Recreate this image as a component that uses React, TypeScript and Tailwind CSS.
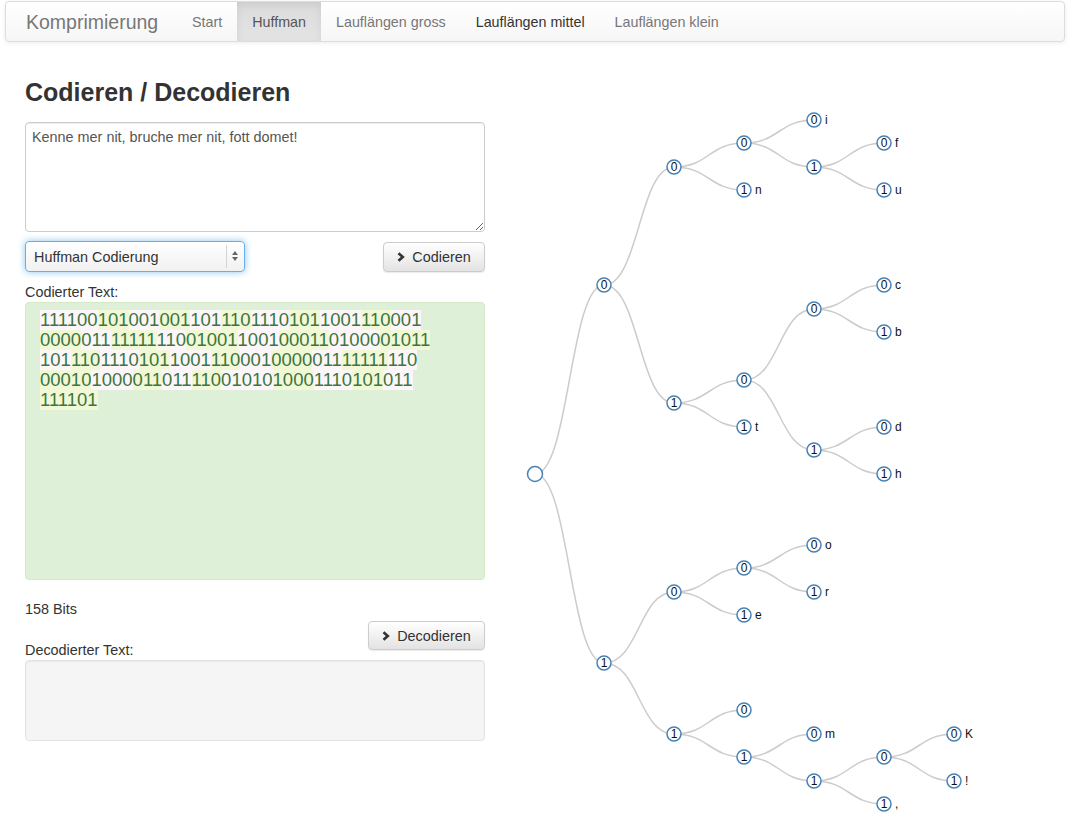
import React from 'react';

// Huffman-Baum: Code -> [y, Zeichen]
const X = [535, 604, 674, 744, 814, 884, 954];
const tree: [string, number, string][] = [
  ['', 474, ''],
  ['0', 285, ''],
  ['1', 663, ''],
  ['00', 167, ''],
  ['01', 403, ''],
  ['10', 592, ''],
  ['11', 734, ''],
  ['000', 143, ''],
  ['001', 190, 'n'],
  ['010', 380, ''],
  ['011', 427, 't'],
  ['100', 568, ''],
  ['101', 615, 'e'],
  ['110', 710, ' '],
  ['111', 757, ''],
  ['0000', 120, 'i'],
  ['0001', 167, ''],
  ['0100', 309, ''],
  ['0101', 450, ''],
  ['1000', 545, 'o'],
  ['1001', 592, 'r'],
  ['1110', 734, 'm'],
  ['1111', 781, ''],
  ['00010', 143, 'f'],
  ['00011', 190, 'u'],
  ['01000', 285, 'c'],
  ['01001', 332, 'b'],
  ['01010', 427, 'd'],
  ['01011', 474, 'h'],
  ['11110', 757, ''],
  ['11111', 804, ','],
  ['111100', 734, 'K'],
  ['111101', 781, '!'],
];

const input = 'Kenne mer nit, bruche mer nit, fott domet!';

const codeOf: Record<string, string> = {};
const yOf: Record<string, number> = {};
tree.forEach(([code, y, ch]) => {
  yOf[code] = y;
  if (ch) codeOf[ch] = code;
});

const encoded = input.split('').map((ch) => codeOf[ch]);
const bits = encoded.join('').length;

function Chevron() {
  return (
    <svg width="8" height="10" viewBox="0 0 8 10" className="shrink-0">
      <path d="M1.5 1.2 L5.8 5 L1.5 8.8" fill="none" stroke="#333" strokeWidth={2.6} />
    </svg>
  );
}

function HuffmanTree() {
  return (
    <svg width={560} height={720} viewBox="505 100 560 720" className="ml-[20px] mt-[58px] shrink-0">
      {tree
        .filter(([code]) => code.length > 0)
        .map(([code, y]) => {
          const parent = code.slice(0, -1);
          const px = X[parent.length];
          const py = yOf[parent];
          const x = X[code.length];
          const mx = (px + x) / 2;
          return (
            <path
              key={'l' + code}
              d={`M${px},${py}C${mx},${py} ${mx},${y} ${x},${y}`}
              fill="none"
              stroke="#ccc"
              strokeWidth={1.5}
            />
          );
        })}
      {tree.map(([code, y, ch]) => {
        const x = X[code.length];
        return (
          <g key={'n' + code}>
            <circle cx={x} cy={y} r={code ? 7 : 7.5} fill="#fff" stroke="#4682b4" strokeWidth={1.5} />
            {code && (
              <text x={x} y={y + 4.3} textAnchor="middle" fontSize={12} fill="#111" fontFamily="'Liberation Sans', Arial, sans-serif">
                {code.slice(-1)}
              </text>
            )}
            {ch.trim() && (
              <text x={x + 11} y={y + 4.3} fontSize={12} fill="#111" fontFamily="'Liberation Sans', Arial, sans-serif">
                {ch}
              </text>
            )}
          </g>
        );
      })}
    </svg>
  );
}

export default function App() {
  const navItems = ['Start', 'Huffman', 'Lauflängen gross', 'Lauflängen mittel', 'Lauflängen klein'];

  return (
    <div className="min-h-screen bg-white font-['Liberation_Sans',Arial,sans-serif] text-[14px] leading-[20px] text-[#333]">
      {/* Navbar */}
      <nav className="ml-[5px] mr-[12px] mt-px flex h-[41px] items-stretch rounded-[4px] border border-[#dcdcdc] bg-linear-to-b from-white to-[#f6f6f6] shadow-[0_1px_4px_rgba(0,0,0,0.08)]">
        <div className="flex w-[171px] items-center pl-[20px] text-[19.5px] text-[#777]">Komprimierung</div>
        <ul className="flex items-stretch text-[14.3px]">
          {navItems.map((item) => (
            <li
              key={item}
              className={
                item === 'Huffman'
                  ? 'flex items-center bg-linear-to-b from-[#dbdbdb] to-[#e4e4e4] px-[15px] text-[#555] shadow-[inset_0_3px_9px_rgba(0,0,0,0.07)]'
                  : item === 'Lauflängen mittel'
                  ? 'flex items-center px-[15px] text-[#333]'
                  : 'flex items-center px-[15px] text-[#777]'
              }
            >
              {item}
            </li>
          ))}
        </ul>
      </nav>

      <div className="flex pl-[25px]">
        {/* Left column */}
        <div className="w-[460px] shrink-0 pt-[36px]">
          <h2 className="text-[25px] font-bold leading-[28px] text-[#333]">Codieren / Decodieren</h2>

          <textarea
            defaultValue={input}
            className="mt-[16px] block h-[110px] w-full rounded-[4px] border border-[#ccc] px-[6px] pt-[4px] text-[14.4px] leading-[20px] text-[#555] shadow-[inset_0_1px_1px_rgba(0,0,0,0.075)] outline-none"
          />

          <div className="mt-[9px] flex items-start justify-between">
            <div className="relative h-[31px] w-[220px] rounded-[4px] border border-[#66afe9] bg-linear-to-b from-white to-[#f1f1f1] shadow-[0_0_7px_rgba(102,175,233,0.75)]">
              <div className="flex h-full items-center pl-[8px] text-[14.4px] text-[#333]">Huffman Codierung</div>
              <div className="absolute right-[17px] top-[3px] bottom-[3px] w-px bg-[#d4d4d4]" />
              <div className="absolute right-[6px] top-[9px] flex flex-col items-center gap-[2px]">
                <div className="h-0 w-0 border-x-[3px] border-b-[4px] border-x-transparent border-b-[#666]" />
                <div className="h-0 w-0 border-x-[3px] border-t-[4px] border-x-transparent border-t-[#666]" />
              </div>
            </div>
            <button className="mt-px flex h-[30px] w-[102px] items-center justify-center gap-[7px] rounded-[4px] border border-[#ccc] bg-linear-to-b from-white to-[#e3e3e3] text-[14.4px] text-[#333] shadow-[0_1px_1px_rgba(0,0,0,0.08)]">
              <Chevron />
              Codieren
            </button>
          </div>

          <div className="mt-[10px] text-[14.4px]">Codierter Text:</div>
          <div className="h-[278px] rounded-[4px] border border-[#d6e9c6] bg-[#dff0d8] pl-[14px] pt-[7px]">
            <div className="flex w-[415px] flex-wrap text-[18.5px] leading-[20px] text-[#3c763d]">
              {encoded.map((code, i) => (
                <span key={i} className={i % 2 === 0 ? 'bg-[#fcf6fb]' : 'bg-[#f1f8d6]'}>
                  {code}
                </span>
              ))}
            </div>
          </div>

          <div className="mt-[19px] text-[14.4px]">{bits} Bits</div>
          <div className="mt-[2px] flex items-end justify-between">
            <div className="text-[14.4px]">Decodierter Text:</div>
            <button className="mb-[10px] flex h-[29px] w-[117px] items-center justify-center gap-[7px] rounded-[4px] border border-[#ccc] bg-linear-to-b from-white to-[#e3e3e3] text-[14.4px] text-[#333] shadow-[0_1px_1px_rgba(0,0,0,0.08)]">
              <Chevron />
              Decodieren
            </button>
          </div>
          <div className="h-[81px] rounded-[4px] border border-[#e3e3e3] bg-[#f5f5f5] shadow-[inset_0_1px_1px_rgba(0,0,0,0.05)]" />
        </div>

        {/* Tree */}
        <HuffmanTree />
      </div>
    </div>
  );
}
